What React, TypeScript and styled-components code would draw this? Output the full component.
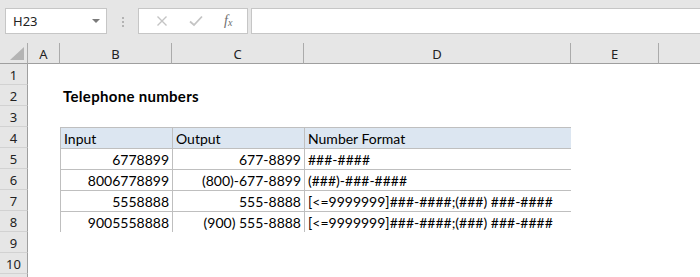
import React from "react"
import styled, { createGlobalStyle } from "styled-components"

const GlobalStyle = createGlobalStyle`
	html, body {
		margin: 0;
		padding: 0;
		background: #ffffff;
		overflow: hidden;
	}
`

const columns = ["A", "B", "C", "D", "E", ""]
const colTemplate = "28px 32px 112px 132px 267px 88px 41px"

type Row = { input: string; output: string; format: string }

const rows: Row[] = [
	{ input: "6778899", output: "677-8899", format: "###-####" },
	{ input: "8006778899", output: "(800)-677-8899", format: "(###)-###-####" },
	{ input: "5558888", output: "555-8888", format: "[<=9999999]###-####;(###) ###-####" },
	{ input: "9005558888", output: "(900) 555-8888", format: "[<=9999999]###-####;(###) ###-####" },
]

const App = () => {
	return (
		<>
			<GlobalStyle />
			<Window>
				<FormulaBar>
					<NameBox>
						<span>H23</span>
						<DropArrow />
					</NameBox>
					<Grip>
						<i />
						<i />
						<i />
					</Grip>
					<FuncButtons>
						<svg width="12" height="12" viewBox="0 0 12 12">
							<path d="M1.5 1.5 L10.5 10.5 M10.5 1.5 L1.5 10.5" stroke="#c4c4c4" strokeWidth="1.4" />
						</svg>
						<svg width="14" height="12" viewBox="0 0 14 12">
							<path d="M1 6.5 L5 10 L13 1.5" stroke="#c4c4c4" strokeWidth="1.8" fill="none" />
						</svg>
						<Fx>
							f<sub>x</sub>
						</Fx>
					</FuncButtons>
					<FormulaInput />
				</FormulaBar>

				<Sheet>
					<Corner>
						<svg width="14" height="13" viewBox="0 0 14 13">
							<path d="M14 0 L14 13 L0 13 Z" fill="#b4b4b4" />
						</svg>
					</Corner>
					{columns.map((c, i) => (
						<ColHead key={i} $last={i === columns.length - 1}>
							{c}
						</ColHead>
					))}

					{Array.from({ length: 11 }, (_, r) => {
						const n = r + 1
						return (
							<React.Fragment key={n}>
								<RowHead>{n <= 10 ? n : ""}</RowHead>
								<Cell />
								{n === 2 && (
									<>
										<Title>Telephone numbers</Title>
										<Cell />
										<Cell />
										<Cell />
									</>
								)}
								{n === 4 && (
									<>
										<HeadCell>Input</HeadCell>
										<HeadCell>Output</HeadCell>
										<HeadCell>Number Format</HeadCell>
										<Cell />
										<Cell />
									</>
								)}
								{n >= 5 && n <= 8 && (
									<>
										<DataCell $right>{rows[n - 5].input}</DataCell>
										<DataCell $right>{rows[n - 5].output}</DataCell>
										<DataCell>{rows[n - 5].format}</DataCell>
										<Cell />
										<Cell />
									</>
								)}
								{(n === 1 || n === 3 || n > 8) && (
									<>
										<Cell />
										<Cell />
										<Cell />
										<Cell />
										<Cell />
									</>
								)}
							</React.Fragment>
						)
					})}
				</Sheet>
			</Window>
		</>
	)
}

export default App

const Window = styled.div`
	width: 700px;
	height: 277px;
	overflow: hidden;
	background: #ffffff;
`

const FormulaBar = styled.div`
	display: flex;
	align-items: flex-start;
	height: 43px;
	box-sizing: border-box;
	padding: 8px 0 0 5px;
	background: #e6e6e6;
`

const NameBox = styled.div`
	display: flex;
	align-items: center;
	justify-content: space-between;
	box-sizing: border-box;
	width: 102px;
	height: 26px;
	padding: 0 6px 0 7px;
	background: #ffffff;
	border: 1px solid #c6c6c6;
	font-family: "Noto Sans", "DejaVu Sans", sans-serif;
	font-size: 13px;
	color: #222;
`

const DropArrow = styled.span`
	width: 0;
	height: 0;
	border-left: 4px solid transparent;
	border-right: 4px solid transparent;
	border-top: 4px solid #7a7a7a;
`

const Grip = styled.div`
	display: flex;
	flex-direction: column;
	gap: 2px;
	width: 31px;
	padding-top: 9px;
	align-items: center;

	i {
		display: block;
		width: 2px;
		height: 2px;
		background: #b3b3b3;
	}
`

const FuncButtons = styled.div`
	display: flex;
	align-items: center;
	justify-content: space-around;
	box-sizing: border-box;
	width: 110px;
	height: 26px;
	padding: 0 4px 0 6px;
	background: #ffffff;
	border: 1px solid #c6c6c6;
`

const Fx = styled.span`
	font-family: "Liberation Serif", serif;
	font-style: italic;
	font-size: 14px;
	color: #6e6e6e;
	line-height: 1;

	sub {
		font-size: 10px;
		vertical-align: -1px;
	}
`

const FormulaInput = styled.div`
	flex: 1;
	height: 26px;
	margin-left: 3px;
	box-sizing: border-box;
	background: #ffffff;
	border: 1px solid #c6c6c6;
	border-right: none;
`

const Sheet = styled.div`
	display: grid;
	grid-template-columns: ${colTemplate};
	grid-auto-rows: 21px;
	grid-template-rows: 21px;
	font-family: "Lato", "Liberation Sans", sans-serif;
	font-size: 14px;
	color: #000;
`

const Corner = styled.div`
	display: flex;
	align-items: flex-end;
	justify-content: flex-end;
	box-sizing: border-box;
	padding: 0 3px 3px 0;
	background: #e6e6e6;
	border-bottom: 1px solid #9f9f9f;
	border-right: 1px solid #ababab;
`

const ColHead = styled.div<{ $last?: boolean }>`
	display: flex;
	align-items: center;
	justify-content: center;
	box-sizing: border-box;
	background: #e6e6e6;
	border-bottom: 1px solid #9f9f9f;
	border-right: ${(p) => (p.$last ? "none" : "1px solid #ababab")};
	font-family: "Noto Sans", "DejaVu Sans", sans-serif;
	font-size: 13px;
	color: #222;
	padding-top: 1px;
`

const RowHead = styled.div`
	display: flex;
	align-items: center;
	justify-content: center;
	box-sizing: border-box;
	background: #e6e6e6;
	border-right: 1px solid #9f9f9f;
	border-bottom: 1px solid #d2d2d2;
	font-family: "Noto Sans", "DejaVu Sans", sans-serif;
	font-size: 13px;
	color: #222;
	padding-top: 1px;
`

const Cell = styled.div`
	background: #ffffff;
`

const Title = styled.div`
	grid-column: span 2;
	display: flex;
	align-items: center;
	padding-left: 3px;
	font-size: 15px;
	letter-spacing: 0.3px;
	font-weight: 700;
	white-space: nowrap;
`

const HeadCell = styled.div`
	display: flex;
	align-items: center;
	box-sizing: border-box;
	padding: 1px 3px 0;
	background: #dce6f1;
	border: 1px solid #bfbfbf;
	margin: 0 -1px -1px 0;
	white-space: nowrap;
`

const DataCell = styled.div<{ $right?: boolean }>`
	display: flex;
	align-items: center;
	justify-content: ${(p) => (p.$right ? "flex-end" : "flex-start")};
	box-sizing: border-box;
	padding: 1px 3px 0 3px;
	background: #ffffff;
	border: 1px solid #bfbfbf;
	margin: 0 -1px -1px 0;
	white-space: nowrap;
`
